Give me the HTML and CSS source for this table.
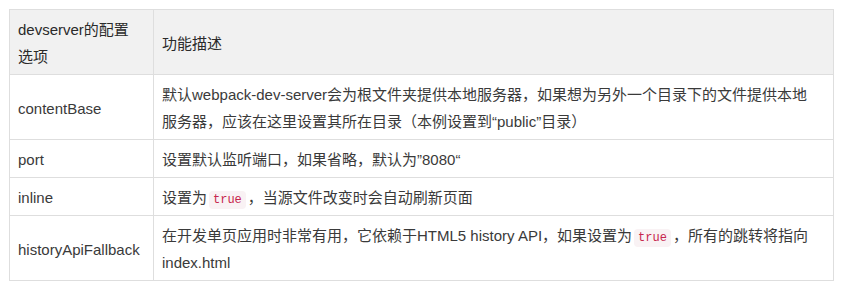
FILE: index.html
```html
<!DOCTYPE html>
<html lang="zh-CN">
<head>
<meta charset="utf-8">
<title>devserver 配置选项</title>
<link rel="stylesheet" href="styles.css">
</head>
<body>
<div class="page">
  <table class="opts">
    <colgroup>
      <col class="col-key">
      <col class="col-desc">
    </colgroup>
    <thead>
      <tr>
        <th class="key"><span class="en">devserver</span>的配置选项</th>
        <th class="desc">功能描述</th>
      </tr>
    </thead>
    <tbody>
      <tr>
        <td class="key"><span class="en">contentBase</span></td>
        <td class="desc">默认<span class="en">webpack-dev-server</span>会为根文件夹提供本地服务器，如果想为另外一个目录下的文件提供本地服务器，应该在这里设置其所在目录（本例设置到<span class="en">“public”</span>目录）</td>
      </tr>
      <tr>
        <td class="key"><span class="en">port</span></td>
        <td class="desc">设置默认监听端口，如果省略，默认为<span class="en">”8080“</span></td>
      </tr>
      <tr>
        <td class="key"><span class="en">inline</span></td>
        <td class="desc">设置为<code class="code">true</code>，当源文件改变时会自动刷新页面</td>
      </tr>
      <tr>
        <td class="key"><span class="en">historyApiFallback</span></td>
        <td class="desc">在开发单页应用时非常有用，它依赖于<span class="en">HTML5 history API</span>，如果设置为<code class="code">true</code>，所有的跳转将指向<span class="en">index.html</span></td>
      </tr>
    </tbody>
  </table>
</div>
</body>
</html>
```

FILE: styles.css
```css
html, body {
  margin: 0;
  padding: 0;
  background: #ffffff;
}

.page {
  padding: 9px;
  font-family: "Noto Sans CJK SC", "Liberation Sans", sans-serif;
  font-size: 15px;
  line-height: 27px;
  color: #3a3a3a;
}

.en {
  font-family: "Liberation Sans", "Noto Sans CJK SC", sans-serif;
  line-height: 23px;
}

.opts {
  width: 825px;
  border-collapse: collapse;
  table-layout: fixed;
}

.col-key {
  width: 144px;
}

.opts th,
.opts td {
  border: 1px solid #dedede;
  padding: 5px 8px;
  text-align: left;
  vertical-align: middle;
}

.opts th {
  background: #f1f1f1;
  font-weight: normal;
  color: #2a2a2a;
}

.opts th.key {
  padding-right: 12px;
}

.opts .desc {
  padding-right: 16px;
}

.code {
  font-family: "Liberation Mono", "DejaVu Sans Mono", monospace;
  font-size: 12px;
  line-height: 18px;
  color: #c7254e;
  background: #f9f2f4;
  border-radius: 4px;
  padding: 2px 4px;
  margin: 0 2px;
}
```
